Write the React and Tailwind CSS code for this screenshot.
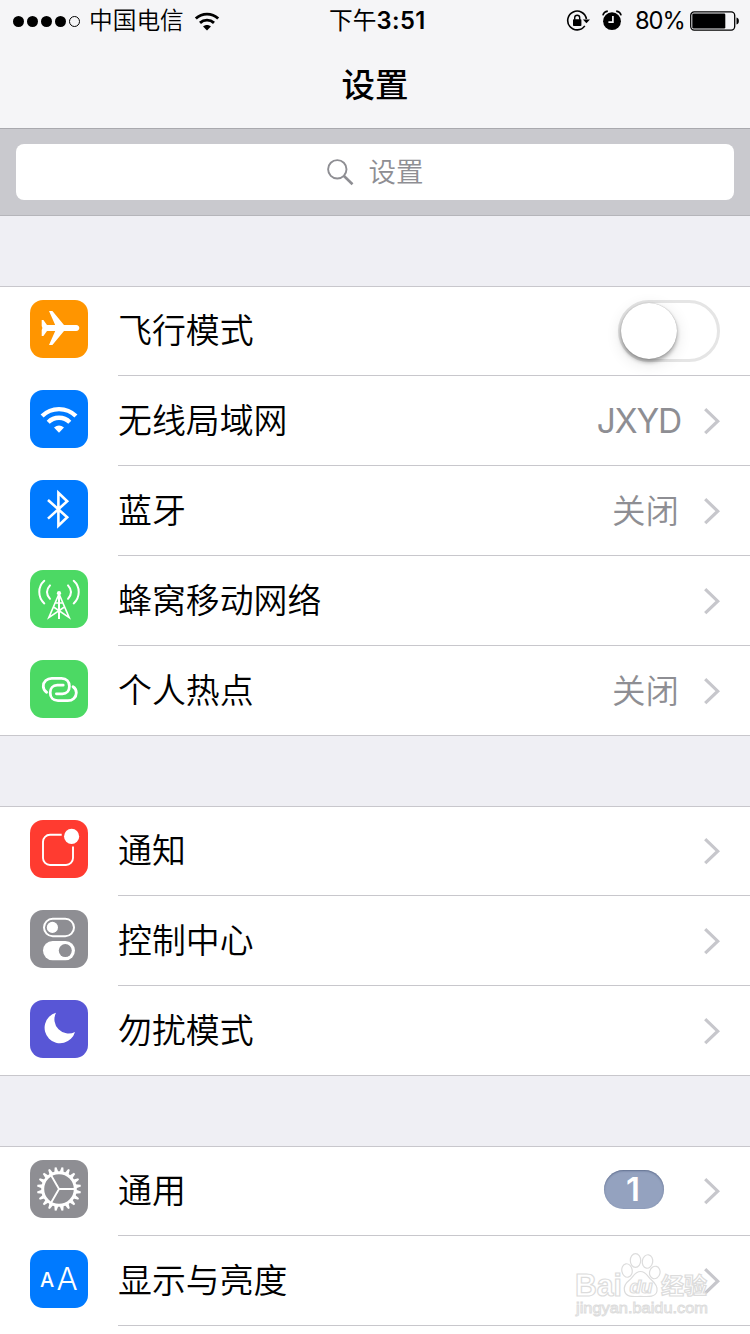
import React from "react";

const tooth = Array.from({ length: 20 }, (_, i) => i * 18 + 9);

function Plane() {
  return (
    <path
      fill="#fff"
      d="M11.7 20H13.4L17 25.1H25.2L19 11H22.4L34 25.1H46.2C48.2 25.1 49.3 26.6 49.3 28S48.2 30.9 46.2 30.9H34L22.4 45H19L25.2 30.9H17L13.4 36H11.7V30L12.4 28L11.7 26Z"
    />
  );
}

function Wifi() {
  return (
    <g fill="none" stroke="#fff" strokeWidth="4.3">
      <path d="M12.1 26.1A23.9 23.9 0 0 1 45.9 26.1" />
      <path d="M18.2 32.2A15.3 15.3 0 0 1 39.8 32.2" />
      <path d="M29 42.8L24 37.6A8 8 0 0 1 34 37.6Z" fill="#fff" stroke="none" />
    </g>
  );
}

function Bluetooth() {
  return (
    <path
      d="M18 20L37.2 37.2L28.4 45.6V12.7L37.2 21.2L18 38.6"
      fill="none"
      stroke="#fff"
      strokeWidth="2.6"
    />
  );
}

function Tower() {
  return (
    <g fill="none" stroke="#fff" strokeWidth="2" strokeLinecap="round">
      <path d="M14.3 10.8C7.6 16.7 7.6 27.3 14.3 33.4" />
      <path d="M20 15.4C16.2 19.6 16.2 24.6 20 28.8" />
      <path d="M43.7 10.8C50.4 16.7 50.4 27.3 43.7 33.4" />
      <path d="M38 15.4C41.8 19.6 41.8 24.6 38 28.8" />
      <circle cx="29" cy="23.2" r="2.1" fill="#fff" stroke="none" />
      <path d="M29 23V49" strokeLinecap="butt" />
      <path
        d="M28.5 25L18.8 47.6L34.4 37M29.5 25L39.2 47.6L23.6 37M26 33H32"
        strokeWidth="1.6"
      />
    </g>
  );
}

function Link() {
  const d =
    "M16.6 32.2C14.3 30.8 13.3 28.6 13.3 26.3C13.3 21.6 17 18.3 21.8 18.3H31.6C36.6 18.3 39.4 21.8 39.4 26.2C39.4 30.6 36.8 33.8 32.4 33.8H26.4";
  return (
    <g fill="none" stroke="#fff" strokeWidth="2.8" strokeLinecap="round">
      <path d={d} />
      <path d={d} transform="rotate(180 29.8 29.5)" />
    </g>
  );
}

function Notice() {
  return (
    <g>
      <path
        d="M31.7 14.8H20A7 7 0 0 0 13 21.8V38A7 7 0 0 0 20 45H36A7 7 0 0 0 43 38V26.5"
        fill="none"
        stroke="#fff"
        strokeWidth="1.9"
      />
      <circle cx="41.6" cy="16.4" r="7.6" fill="#fff" />
    </g>
  );
}

function Control() {
  return (
    <g>
      <rect x="14" y="8.8" width="30" height="17.4" rx="8.7" fill="none" stroke="#fff" strokeWidth="2" />
      <circle cx="22.4" cy="17.4" r="5.6" fill="#fff" />
      <rect x="13" y="31" width="32" height="19.2" rx="9.6" fill="#fff" />
      <circle cx="35.3" cy="40.6" r="6.5" fill="#8e8e93" />
    </g>
  );
}

function Moon() {
  return <path fill="#fff" d="M26 12.8A15.5 15.5 0 1 0 45 32A14.2 14.2 0 0 1 26 12.8Z" />;
}

function Gear() {
  return (
    <g>
      <circle cx="29" cy="29" r="16.3" fill="none" stroke="#fff" strokeWidth="3" />
      {tooth.map((a) => (
        <path key={a} d="M26.9 12.5L28.1 7H29.9L31.1 12.5Z" fill="#fff" transform={`rotate(${a} 29 29)`} />
      ))}
      <path d="M29 29H44.5M29 29L21.2 15.6M29 29L21.2 42.4" stroke="#fff" strokeWidth="1.9" />
    </g>
  );
}

function Letters() {
  return (
    <g fill="#fff" fontFamily="Inter, sans-serif">
      <text x="10" y="37" fontSize="20.4" fontWeight="500" textLength="14.2" lengthAdjust="spacingAndGlyphs">A</text>
      <text x="26.6" y="39.7" fontSize="30.8" fontWeight="350" textLength="21.2" lengthAdjust="spacingAndGlyphs">A</text>
    </g>
  );
}

function Chevron() {
  return (
    <svg className="ml-6 h-7 w-[18px] shrink-0" viewBox="0 0 18 28" fill="none">
      <path d="M2.2 2.2L14.7 14.2L2.2 26.2" stroke="#c7c7cc" strokeWidth="3.2" />
    </svg>
  );
}

function Toggle() {
  return (
    <div className="mr-px h-[62px] w-[102px] rounded-full border-[3px] border-[#e5e5e5]">
      <div className="size-[56px] rounded-full bg-white shadow-[0_0_1px_rgba(0,0,0,0.35),0_3px_4px_rgba(0,0,0,0.32),0_4px_16px_rgba(0,0,0,0.12)]" />
    </div>
  );
}

const groups = [
  [
    { label: "飞行模式", color: "bg-[#ff9500]", Icon: Plane, toggle: true },
    { label: "无线局域网", color: "bg-[#007aff]", Icon: Wifi, value: "JXYD" },
    { label: "蓝牙", color: "bg-[#007aff]", Icon: Bluetooth, value: "关闭" },
    { label: "蜂窝移动网络", color: "bg-[#4cd964]", Icon: Tower },
    { label: "个人热点", color: "bg-[#4cd964]", Icon: Link, value: "关闭" },
  ],
  [
    { label: "通知", color: "bg-[#ff3b30]", Icon: Notice },
    { label: "控制中心", color: "bg-[#8e8e93]", Icon: Control },
    { label: "勿扰模式", color: "bg-[#5856d6]", Icon: Moon },
  ],
  [
    { label: "通用", color: "bg-[#8e8e93]", Icon: Gear, badge: "1" },
    { label: "显示与亮度", color: "bg-[#007aff]", Icon: Letters, open: true },
  ],
];

function Row({ row, last }) {
  const { label, color, Icon, value, badge, toggle, open } = row;
  const full = last && !open;
  return (
    <div className={full ? "flex h-[90px] border-b border-[#c8c7cc] pl-[30px]" : "flex h-[90px] pl-[30px]"}>
      <div className={`mt-3.5 size-[58px] shrink-0 overflow-hidden rounded-[13px] ${color}`}>
        <svg viewBox="0 0 58 58" className="size-[58px]">
          <Icon />
        </svg>
      </div>
      <div
        className={
          full
            ? "ml-[30px] flex flex-1 items-center pr-[29px]"
            : "ml-[30px] flex flex-1 items-center border-b border-[#c8c7cc] pr-[29px]"
        }
      >
        <span className="flex-1 text-[33.9px] font-[350] leading-[50px]">{label}</span>
        {value && (
          <span
            className={
              value === "JXYD"
                ? "-mr-0.5 text-[33.5px] leading-[50px] tracking-[-0.035em] text-[#8e8e93]"
                : "text-[33.5px] font-[350] leading-[50px] text-[#8e8e93]"
            }
          >
            {value}
          </span>
        )}
        {badge && (
          <span className="mr-[15px] -mt-0.5 flex h-[39px] w-[60px] items-center justify-center rounded-full bg-[#94a2bf] pr-0.5 text-[33px] font-semibold leading-none text-white shadow-[inset_0_1px_2px_rgba(60,75,110,0.6)]">
            {badge}
          </span>
        )}
        {toggle ? <Toggle /> : <Chevron />}
      </div>
    </div>
  );
}

function StatusBar() {
  return (
    <div className="grid h-10 grid-cols-[329px_1fr_184px] items-center">
      <div className="flex items-center pl-[13px]">
        <div className="flex gap-[3px]">
          {[0, 1, 2, 3].map((i) => (
            <span key={i} className="size-[11px] rounded-full bg-black" />
          ))}
          <span className="size-[11px] rounded-full border border-black" />
        </div>
        <span className="ml-[9px] text-[23.7px] font-[350] leading-[42px]">中国电信</span>
        <svg className="ml-2.5 h-[19px] w-[26px]" viewBox="0 0 26 19" fill="none" stroke="#000" strokeWidth="2.9">
          <path d="M1.8 6.5C8.2 .6 17.8 .6 24.2 6.5M6 10.8C10 7.2 16 7.2 20 10.8" />
          <path d="M13 18.5L9.1 14.6C11.3 12.6 14.7 12.6 16.9 14.6Z" fill="#000" stroke="none" />
        </svg>
      </div>
      <div className="text-[23.7px] leading-[42px]">
        下午<span className="font-semibold tracking-[0.02em]">3:51</span>
      </div>
      <div className="flex items-center">
        <svg className="-mt-px h-[22px] w-6" viewBox="0 0 24 22">
          <path d="M18.8 15.9A9.4 9.4 0 1 1 20.4 9" fill="none" stroke="#000" strokeWidth="1.6" />
          <path d="M16.9 9.4H24L20.4 13.2Z" />
          <rect x="7" y="9.3" width="8.4" height="6.7" rx=".8" />
          <path d="M8.7 9.7V7.8A2.5 2.5 0 0 1 13.7 7.8V9.7" fill="none" stroke="#000" strokeWidth="1.4" />
        </svg>
        <svg className="-mt-0.5 ml-3 h-[21px] w-5" viewBox="0 0 20 21">
          <circle cx="10" cy="11.2" r="8.9" />
          <path d="M10.9 6V12.2H6.4" fill="none" stroke="#f5f5f7" strokeWidth="1.7" />
          <path d="M.9 5.4C1.5 3 3.4 1.5 5.8 1.2M19.1 5.4C18.5 3 16.6 1.5 14.2 1.2" fill="none" stroke="#000" strokeWidth="1.7" />
        </svg>
        <span className="ml-[13px] w-[55px] text-[23.7px] leading-[42px] tracking-[-0.045em]">80%</span>
        <svg className="h-5 w-[50px]" viewBox="0 0 50 20">
          <rect x=".7" y=".9" width="44" height="18.2" rx="3.5" fill="none" stroke="#000" strokeWidth="1.3" />
          <rect x="2.3" y="2.6" width="33" height="14.8" rx="1.2" />
          <path d="M46.5 6.5C49.7 7.3 49.7 12.7 46.5 13.5Z" />
        </svg>
      </div>
    </div>
  );
}

function Watermark() {
  return (
    <svg
      className="absolute left-[570px] top-[1248px] h-[72px] w-[145px]"
      viewBox="0 0 145 72"
      fill="#fff"
      fillOpacity=".75"
      stroke="#dcdcdc"
      strokeWidth="1.2"
    >
      <g fontFamily="'Liberation Sans', 'Noto Sans CJK SC', sans-serif" fontWeight="700">
        <text x="5" y="47.5" fontSize="31" textLength="47" lengthAdjust="spacingAndGlyphs">Bai</text>
        <text x="91" y="45.5" fontSize="23" textLength="46" lengthAdjust="spacingAndGlyphs">经验</text>
      </g>
      <text
        x="6"
        y="65"
        fontSize="15"
        strokeWidth=".9"
        fontFamily="'Liberation Sans', sans-serif"
        textLength="132"
        lengthAdjust="spacingAndGlyphs"
      >
        jingyan.baidu.com
      </text>
      <ellipse cx="57" cy="22.5" rx="5.2" ry="6.8" transform="rotate(-10 57 22.5)" />
      <ellipse cx="65.5" cy="12.5" rx="5.2" ry="6.8" />
      <ellipse cx="77.5" cy="13.5" rx="5.2" ry="6.8" transform="rotate(10 77.5 13.5)" />
      <ellipse cx="84.8" cy="24.5" rx="5.2" ry="6.3" transform="rotate(15 84.8 24.5)" />
      <path d="M70.5 23.5C65 23.5 63 29 59.5 32C55 35.5 53.5 39 54.5 43C56 49 62 48.8 70.5 48.3C79 48.8 86 49 87 43C88 38.5 85.5 35.5 81.5 32C78 29 76 23.5 70.5 23.5Z" />
      <text x="59.5" y="44.5" fontSize="19" fontStyle="italic" fontWeight="700" fontFamily="'Liberation Sans', sans-serif">du</text>
    </svg>
  );
}

export default function App() {
  return (
    <div className="relative flex h-[1334px] w-[750px] flex-col overflow-hidden bg-[#efeff4] font-['Inter','Noto_Sans_CJK_SC',sans-serif] text-black">
      <header className="h-[129px] shrink-0 border-b border-[#a9a9ae] bg-[#f5f5f7]">
        <StatusBar />
        <h1 className="mt-5 text-center text-[33.5px] font-medium leading-[50px]">设置</h1>
      </header>
      <div className="h-[87px] shrink-0 border-b border-[#b5b5ba] bg-[#c9c9ce] px-4 pt-[15px]">
        <div className="flex h-14 items-center justify-center rounded-lg bg-white text-[27.5px] font-[350] text-[#8e8e93]">
          <svg className="mr-[15px] size-[27px]" viewBox="0 0 27 27" fill="none" stroke="#8e8e93">
            <circle cx="10.3" cy="10.3" r="9.2" strokeWidth="1.9" />
            <path d="M17 17L25.5 25.3" strokeWidth="2.6" />
          </svg>
          <span className="pt-px">设置</span>
        </div>
      </div>
      <main className="mt-[70px] flex flex-col gap-[70px]">
        {groups.map((rows, g) => (
          <section key={g} className="bg-white shadow-[inset_0_1px_0_#c8c7cc]">
            {rows.map((row, i) => (
              <Row key={row.label} row={row} last={i === rows.length - 1} />
            ))}
          </section>
        ))}
      </main>
      <div className="flex-1 shrink-0 bg-white" />
      <Watermark />
    </div>
  );
}
